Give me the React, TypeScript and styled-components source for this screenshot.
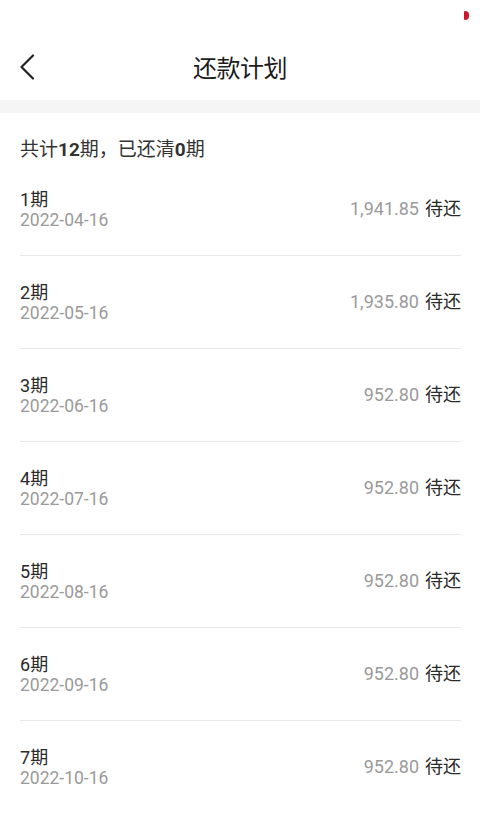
import React from "react";
import styled, { createGlobalStyle } from "styled-components";

const GlobalStyle = createGlobalStyle`
  body {
    margin: 0;
    background: #ffffff;
    font-family: Roboto, "Noto Sans CJK SC", sans-serif;
  }
`;

type Plan = {
  period: number;
  date: string;
  amount: string;
};

const plans: Plan[] = [
  { period: 1, date: "2022-04-16", amount: "1,941.85" },
  { period: 2, date: "2022-05-16", amount: "1,935.80" },
  { period: 3, date: "2022-06-16", amount: "952.80" },
  { period: 4, date: "2022-07-16", amount: "952.80" },
  { period: 5, date: "2022-08-16", amount: "952.80" },
  { period: 6, date: "2022-09-16", amount: "952.80" },
  { period: 7, date: "2022-10-16", amount: "952.80" },
  { period: 8, date: "2022-11-16", amount: "952.80" },
  { period: 9, date: "2022-12-16", amount: "952.80" },
  { period: 10, date: "2023-01-16", amount: "952.80" },
  { period: 11, date: "2023-02-16", amount: "952.80" },
  { period: 12, date: "2023-03-16", amount: "952.80" },
];

const App = () => {
  return (
    <Page>
      <GlobalStyle />
      <StatusBar>
        <RecDot />
      </StatusBar>
      <NavBar>
        <BackButton>
          <svg width="16" height="26" viewBox="0 0 16 26">
            <path
              d="M14 1.5 L2.5 13 L14 24.5"
              fill="none"
              stroke="#222"
              strokeWidth="2.2"
              strokeLinecap="round"
              strokeLinejoin="round"
            />
          </svg>
        </BackButton>
        <Title>还款计划</Title>
      </NavBar>
      <Divider />
      <Summary>
        共计<b>12</b>期，已还清<b>0</b>期
      </Summary>
      <List>
        {plans.map((p) => (
          <Row key={p.period}>
            <Left>
              <Period>{p.period}期</Period>
              <DateText>{p.date}</DateText>
            </Left>
            <Right>
              <Amount>{p.amount}</Amount>
              <Status>待还</Status>
            </Right>
          </Row>
        ))}
      </List>
    </Page>
  );
};

export default App;

const Page = styled.div`
  width: 100%;
  min-height: 100vh;
  background: #ffffff;
  display: flex;
  flex-direction: column;
`;

const StatusBar = styled.div`
  height: 34px;
  display: flex;
  justify-content: flex-end;
  align-items: flex-start;
  padding: 11px 11px 0 0;
  box-sizing: border-box;
`;

const RecDot = styled.span`
  width: 5px;
  height: 9px;
  background: #d0142c;
  border-radius: 1px 4px 4px 1px;
`;

const NavBar = styled.div`
  height: 66px;
  display: flex;
  align-items: center;
  justify-content: center;
  position: relative;
`;

const BackButton = styled.div`
  position: absolute;
  left: 19px;
  top: 20px;
  display: flex;
`;

const Title = styled.div`
  font-size: 24px;
  color: #1c1c1c;
  letter-spacing: -0.5px;
  margin-top: -1px;
`;

const Divider = styled.div`
  height: 13px;
  background: #f5f5f5;
`;

const Summary = styled.div`
  padding: 23px 20px 0;
  font-size: 19px;
  line-height: 27px;
  color: #333333;

  b {
    font-weight: 700;
  }
`;

const List = styled.div`
  display: flex;
  flex-direction: column;
  padding: 0 19px 0 20px;
`;

const Row = styled.div`
  display: flex;
  justify-content: space-between;
  align-items: center;
  padding: 26px 0 24px;
  border-bottom: 1px solid #e8e8e8;
`;

const Left = styled.div`
  display: flex;
  flex-direction: column;
`;

const Period = styled.div`
  font-size: 18px;
  line-height: 21px;
  color: #2a2a2a;
`;

const DateText = styled.div`
  font-size: 17.5px;
  line-height: 21px;
  color: #9a9a9a;
`;

const Right = styled.div`
  display: flex;
  align-items: baseline;
  gap: 6px;
  margin-top: -6px;
`;

const Amount = styled.span`
  font-size: 18px;
  color: #9a9a9a;
`;

const Status = styled.span`
  font-size: 18px;
  color: #2a2a2a;
`;
